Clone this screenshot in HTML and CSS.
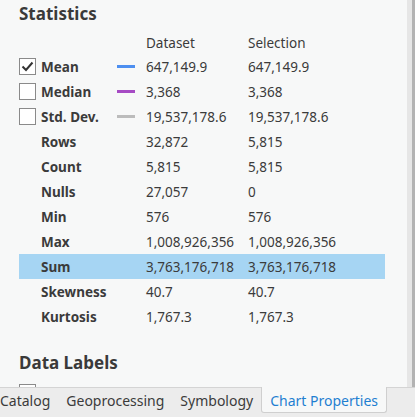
FILE: index.html
```html
<!DOCTYPE html>
<html>
<head>
<meta charset="utf-8">
<link rel="stylesheet" href="styles.css">
</head>
<body>
<div class="window">
  <div class="pane">
    <div class="content">
      <h2 class="title">Statistics</h2>
      <div class="stats">
        <div class="row head">
          <span class="c-check"></span><span class="c-label"></span><span class="c-swatch"></span>
          <span class="c-val">Dataset</span><span class="c-val">Selection</span>
        </div>
        <div class="row">
          <span class="c-check"><span class="box checked"><svg viewBox="0 0 17 17" width="17" height="17"><path d="M3.5 8.5 L7 12 L13.5 4.5" fill="none" stroke="#333" stroke-width="2"/></svg></span></span>
          <span class="c-label">Mean</span><span class="c-swatch"><span class="line blue"></span></span>
          <span class="c-val">647,149.9</span><span class="c-val">647,149.9</span>
        </div>
        <div class="row">
          <span class="c-check"><span class="box"></span></span>
          <span class="c-label">Median</span><span class="c-swatch"><span class="line purple"></span></span>
          <span class="c-val">3,368</span><span class="c-val">3,368</span>
        </div>
        <div class="row">
          <span class="c-check"><span class="box"></span></span>
          <span class="c-label">Std. Dev.</span><span class="c-swatch"><span class="line gray"></span></span>
          <span class="c-val">19,537,178.6</span><span class="c-val">19,537,178.6</span>
        </div>
        <div class="row">
          <span class="c-check"></span><span class="c-label">Rows</span><span class="c-swatch"></span>
          <span class="c-val">32,872</span><span class="c-val">5,815</span>
        </div>
        <div class="row">
          <span class="c-check"></span><span class="c-label">Count</span><span class="c-swatch"></span>
          <span class="c-val">5,815</span><span class="c-val">5,815</span>
        </div>
        <div class="row">
          <span class="c-check"></span><span class="c-label">Nulls</span><span class="c-swatch"></span>
          <span class="c-val">27,057</span><span class="c-val">0</span>
        </div>
        <div class="row">
          <span class="c-check"></span><span class="c-label">Min</span><span class="c-swatch"></span>
          <span class="c-val">576</span><span class="c-val">576</span>
        </div>
        <div class="row">
          <span class="c-check"></span><span class="c-label">Max</span><span class="c-swatch"></span>
          <span class="c-val">1,008,926,356</span><span class="c-val">1,008,926,356</span>
        </div>
        <div class="row selected">
          <span class="c-check"></span><span class="c-label">Sum</span><span class="c-swatch"></span>
          <span class="c-val">3,763,176,718</span><span class="c-val">3,763,176,718</span>
        </div>
        <div class="row">
          <span class="c-check"></span><span class="c-label">Skewness</span><span class="c-swatch"></span>
          <span class="c-val">40.7</span><span class="c-val">40.7</span>
        </div>
        <div class="row">
          <span class="c-check"></span><span class="c-label">Kurtosis</span><span class="c-swatch"></span>
          <span class="c-val">1,767.3</span><span class="c-val">1,767.3</span>
        </div>
      </div>
      <h2 class="title second">Data Labels</h2>
      <div class="row opt">
        <span class="c-check"><span class="box"></span></span>
        <span class="opt-label">Label bars</span>
      </div>
    </div>
    <div class="scrollbar"><div class="thumb"></div></div>
  </div>
  <div class="tabs">
    <span class="tab first">Catalog</span>
    <span class="tab">Geoprocessing</span>
    <span class="tab">Symbology</span>
    <span class="tab active">Chart Properties</span>
  </div>
</div>
</body>
</html>
```
FILE: styles.css
```css
* { box-sizing: border-box; }
html, body { margin: 0; padding: 0; }
body {
  width: 415px;
  height: 417px;
  overflow: hidden;
  background: #f7f8f8;
  font-family: "Noto Sans", "Open Sans", sans-serif;
  color: #3b3b3b;
  font-size: 13.5px;
}
.window { display: flex; flex-direction: column; height: 417px; }
.pane { display: flex; height: 387px; overflow: hidden; }
.content { flex: 1; padding-left: 19px; padding-right: 22px; overflow: hidden; }
.scrollbar { width: 8px; background: #e6e6e6; display: flex; justify-content: flex-end; }
.thumb { width: 3px; height: 100%; background: #b3b3b3; }

.title {
  margin: 0;
  font-size: 17px;
  font-weight: 700;
  color: #3a3a3a;
  height: 32px;
  line-height: 28px;
}
.title.second { margin-top: 17px; height: 34px; line-height: 34px; }

.stats { display: flex; flex-direction: column; }
.row {
  display: grid;
  grid-template-columns: 22px 76px 29px 102px 1fr;
  align-items: center;
  height: 25px;
  white-space: nowrap;
}
.row.head { height: 22px; }
.row.selected { background: #a6d5f3; }
.row.opt { grid-template-columns: 22px 1fr; align-items: start; padding-top: 4px; }
.c-label { font-weight: 700; }
.c-check { display: flex; align-items: center; }
.box {
  width: 17px; height: 17px;
  border: 1px solid #8a8a8a;
  background: #fff;
  display: block;
  position: relative;
}
.box svg { position: absolute; left: -1px; top: -1px; }
.c-swatch { display: flex; align-items: center; }
.line { display: block; width: 18px; height: 3px; }
.line.blue { background: #4d8ff0; }
.line.purple { background: #a64bc4; }
.line.gray { background: #bcbcbc; }

.tabs {
  height: 30px;
  background: #ececec;
  border-top: 1px solid #d4d4d4;
  display: flex;
  align-items: flex-start;
  font-size: 14px;
  color: #3b3b3b;
}
.tab { padding: 3px 8px 0 8px; line-height: 20px; height: 25px; }
.tab.first { margin-left: -8px; }
.tab.active {
  margin-top: -1px;
  height: 26px;
  background: #f7f8f8;
  color: #1f7fd1;
  border: 1px solid #cfcfcf;
  border-top: none;
  border-radius: 0 0 3px 3px;
  padding-top: 4px;
}
```
